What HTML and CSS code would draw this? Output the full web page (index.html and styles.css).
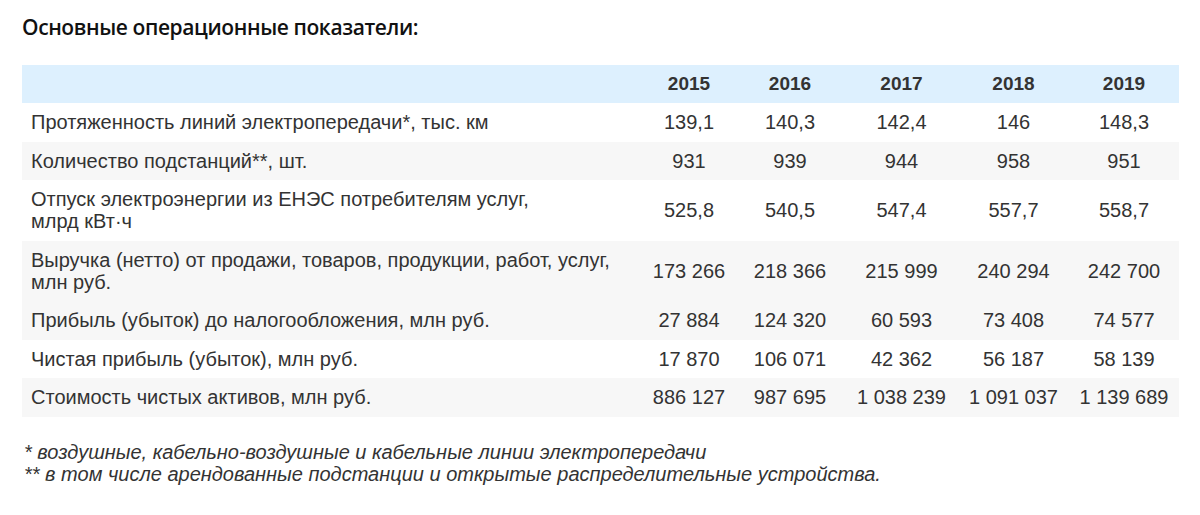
FILE: index.html
```html
<!DOCTYPE html>
<html lang="ru">
<head>
<meta charset="utf-8">
<title>Основные операционные показатели</title>
<link rel="stylesheet" href="styles.css">
</head>
<body>
<div class="page">
  <h1 class="title">Основные операционные показатели:</h1>
  <table class="stats">
    <colgroup>
      <col class="c-label">
      <col class="c-2015">
      <col class="c-2016">
      <col class="c-2017">
      <col class="c-2018">
      <col class="c-2019">
    </colgroup>
    <thead>
      <tr class="head">
        <th></th>
        <th>2015</th>
        <th>2016</th>
        <th>2017</th>
        <th>2018</th>
        <th>2019</th>
      </tr>
    </thead>
    <tbody>
      <tr>
        <td>Протяженность линий электропередачи*, тыс. км</td>
        <td>139,1</td><td>140,3</td><td>142,4</td><td>146</td><td>148,3</td>
      </tr>
      <tr class="alt">
        <td>Количество подстанций**, шт.</td>
        <td>931</td><td>939</td><td>944</td><td>958</td><td>951</td>
      </tr>
      <tr>
        <td>Отпуск электроэнергии из ЕНЭС потребителям услуг,<br>млрд кВт·ч</td>
        <td>525,8</td><td>540,5</td><td>547,4</td><td>557,7</td><td>558,7</td>
      </tr>
      <tr class="alt">
        <td>Выручка (нетто) от продажи, товаров, продукции, работ, услуг,<br>млн руб.</td>
        <td>173 266</td><td>218 366</td><td>215 999</td><td>240 294</td><td>242 700</td>
      </tr>
      <tr class="alt">
        <td>Прибыль (убыток) до налогообложения, млн руб.</td>
        <td>27 884</td><td>124 320</td><td>60 593</td><td>73 408</td><td>74 577</td>
      </tr>
      <tr>
        <td>Чистая прибыль (убыток), млн руб.</td>
        <td>17 870</td><td>106 071</td><td>42 362</td><td>56 187</td><td>58 139</td>
      </tr>
      <tr class="alt">
        <td>Стоимость чистых активов, млн руб.</td>
        <td>886 127</td><td>987 695</td><td>1 038 239</td><td>1 091 037</td><td>1 139 689</td>
      </tr>
    </tbody>
  </table>
  <div class="notes">
    <p>* воздушные, кабельно-воздушные и кабельные линии электропередачи</p>
    <p>** в том числе арендованные подстанции и открытые распределительные устройства.</p>
  </div>
</div>
</body>
</html>
```
FILE: styles.css
```css
html, body {
  margin: 0;
  padding: 0;
  background: #ffffff;
}

body {
  font-family: "Liberation Sans", Arial, sans-serif;
  color: #333333;
}

.page {
  padding: 13px 21px 0 22px;
}

.title {
  margin: 0;
  font-family: "Open Sans", "Noto Sans", sans-serif;
  font-size: 21px;
  font-weight: 600;
  line-height: 28px;
  color: #111111;
  letter-spacing: -0.4px;
}

.stats {
  margin-top: 24px;
  width: 1157px;
  border-collapse: collapse;
  table-layout: fixed;
  font-size: 20px;
  line-height: 22px;
}

.c-label { width: 621px; }
.c-2015 { width: 92px; }
.c-2016 { width: 110px; }
.c-2017 { width: 113px; }
.c-2018 { width: 111px; }
.c-2019 { width: 110px; }

.stats th,
.stats td {
  padding: 8px 0 8.5px 9px;
  text-align: left;
  vertical-align: middle;
  white-space: nowrap;
}

.stats th:not(:first-child),
.stats td:not(:first-child) {
  text-align: center;
  padding-left: 0;
}

.head th {
  background: #ddf0fe;
  font-size: 19px;
  font-weight: bold;
  line-height: 22px;
  padding-bottom: 8px;
}

.stats tbody tr {
  background: #ffffff;
}

.stats tbody tr.alt {
  background: #f7f7f7;
}

.notes {
  margin-top: 24px;
  font-style: italic;
  font-size: 20px;
  line-height: 22px;
  padding-left: 2px;
}

.notes p {
  margin: 0;
}
```
